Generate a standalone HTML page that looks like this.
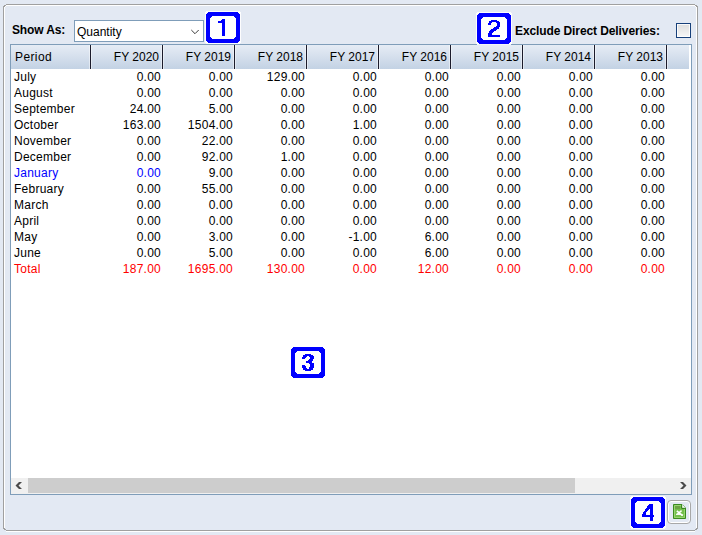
<!DOCTYPE html>
<html><head><meta charset="utf-8">
<style>
*{margin:0;padding:0;box-sizing:border-box}
html,body{width:702px;height:535px;overflow:hidden;background:#E3E9F3;font-family:"Liberation Sans",sans-serif;font-size:12px;color:#000}
.a{position:absolute}
.lbl{position:absolute;font-weight:bold;left:12px;top:22px;line-height:16px}
.combo{position:absolute;left:74px;top:20px;width:130px;height:22px;border:1px solid #7F9DB9;background:#fff}
.combo span{position:absolute;left:2px;top:3px;line-height:16px}
.grid{position:absolute;left:10px;top:44px;width:682px;height:451px;border:1px solid #7F9DB9;background:#fff}
.hdr{position:absolute;left:11px;top:45px;width:678px;height:24px;background:linear-gradient(#E6ECF5,#C3D2E4)}
.ht{position:absolute;top:45px;height:24px;line-height:24px;text-align:right;white-space:nowrap}
.sep{position:absolute;top:45px;width:3px;height:24px;background:linear-gradient(90deg,rgba(255,255,255,.45) 0 1px,#1b1b2b 1px 2px,rgba(255,255,255,.45) 2px 3px)}
.c{position:absolute;height:16px;line-height:16px;text-align:right;white-space:nowrap;letter-spacing:.25px}
.blu{color:#0000FF}
.tot{color:#FF0000}
.sb{position:absolute;left:11px;top:478px;width:680px;height:16px;background:#F0F0F0}
.thumb{position:absolute;left:28px;top:478px;width:547px;height:15px;background:#CDCDCD}
.chk{position:absolute;left:676px;top:23px;width:15px;height:15px;border:1px solid #17407A;background:linear-gradient(#DDDDDD,#F7F7F7);box-shadow:inset 0 0 0 1px rgba(255,255,255,.85)}
.xbtn{position:absolute;left:667px;top:500px;width:24px;height:24px;border:1px solid #A8A8A8;border-radius:4px;box-shadow:inset 0 0 0 1px #fff}
</style></head><body>
<svg class="a" style="left:0;top:0" width="702" height="535" shape-rendering="crispEdges"><path d="M6 4H695V5H6ZM4 5H6V6H4ZM3 6H5V7H3ZM3 7H4V528H3ZM3 528H5V529H3ZM4 529H6V530H4ZM6 530H695V531H6ZM695 529H697V530H695ZM696 528H698V529H696ZM697 7H698V528H697ZM696 6H698V7H696ZM695 5H697V6H695Z" fill="#A0A0A0"/><path d="M6 5H695V6H6ZM5 6H6V7H5ZM4 7H5V528H4ZM696 7H697V528H696ZM695 6H696V7H695ZM6 531H695V532H6Z" fill="#fff"/></svg>
<div class="lbl" style="letter-spacing:-.15px">Show As:</div>
<div class="combo"><span>Quantity</span>
<svg class="a" style="left:115px;top:8px" width="10" height="7" viewBox="0 0 10 7"><path d="M1.3 1 L5 4.7 L8.7 1" fill="none" stroke="#3A3A3A" stroke-width="1"/></svg>
</div>
<div class="lbl" style="left:515px;top:23px;letter-spacing:-.1px">Exclude Direct Deliveries:</div>
<div class="chk"></div>
<div class="grid"></div>
<div class="hdr"></div>
<div class="ht" style="left:15px;width:75px;text-align:left;letter-spacing:.4px">Period</div>
<div class="ht" style="left:90px;width:69px">FY 2020</div>
<div class="ht" style="left:162px;width:69px">FY 2019</div>
<div class="ht" style="left:234px;width:69px">FY 2018</div>
<div class="ht" style="left:306px;width:69px">FY 2017</div>
<div class="ht" style="left:378px;width:69px">FY 2016</div>
<div class="ht" style="left:450px;width:69px">FY 2015</div>
<div class="ht" style="left:522px;width:69px">FY 2014</div>
<div class="ht" style="left:594px;width:69px">FY 2013</div>
<div class="sep" style="left:89px"></div>
<div class="sep" style="left:161px"></div>
<div class="sep" style="left:233px"></div>
<div class="sep" style="left:305px"></div>
<div class="sep" style="left:377px"></div>
<div class="sep" style="left:449px"></div>
<div class="sep" style="left:521px"></div>
<div class="sep" style="left:593px"></div>
<div class="sep" style="left:665px"></div>
<div class="c" style="left:14px;top:69px;width:76px;text-align:left">July</div>
<div class="c" style="left:90px;top:69px;width:71px">0.00</div>
<div class="c" style="left:162px;top:69px;width:71px">0.00</div>
<div class="c" style="left:234px;top:69px;width:71px">129.00</div>
<div class="c" style="left:306px;top:69px;width:71px">0.00</div>
<div class="c" style="left:378px;top:69px;width:71px">0.00</div>
<div class="c" style="left:450px;top:69px;width:71px">0.00</div>
<div class="c" style="left:522px;top:69px;width:71px">0.00</div>
<div class="c" style="left:594px;top:69px;width:71px">0.00</div>
<div class="c" style="left:14px;top:85px;width:76px;text-align:left">August</div>
<div class="c" style="left:90px;top:85px;width:71px">0.00</div>
<div class="c" style="left:162px;top:85px;width:71px">0.00</div>
<div class="c" style="left:234px;top:85px;width:71px">0.00</div>
<div class="c" style="left:306px;top:85px;width:71px">0.00</div>
<div class="c" style="left:378px;top:85px;width:71px">0.00</div>
<div class="c" style="left:450px;top:85px;width:71px">0.00</div>
<div class="c" style="left:522px;top:85px;width:71px">0.00</div>
<div class="c" style="left:594px;top:85px;width:71px">0.00</div>
<div class="c" style="left:14px;top:101px;width:76px;text-align:left">September</div>
<div class="c" style="left:90px;top:101px;width:71px">24.00</div>
<div class="c" style="left:162px;top:101px;width:71px">5.00</div>
<div class="c" style="left:234px;top:101px;width:71px">0.00</div>
<div class="c" style="left:306px;top:101px;width:71px">0.00</div>
<div class="c" style="left:378px;top:101px;width:71px">0.00</div>
<div class="c" style="left:450px;top:101px;width:71px">0.00</div>
<div class="c" style="left:522px;top:101px;width:71px">0.00</div>
<div class="c" style="left:594px;top:101px;width:71px">0.00</div>
<div class="c" style="left:14px;top:117px;width:76px;text-align:left">October</div>
<div class="c" style="left:90px;top:117px;width:71px">163.00</div>
<div class="c" style="left:162px;top:117px;width:71px">1504.00</div>
<div class="c" style="left:234px;top:117px;width:71px">0.00</div>
<div class="c" style="left:306px;top:117px;width:71px">1.00</div>
<div class="c" style="left:378px;top:117px;width:71px">0.00</div>
<div class="c" style="left:450px;top:117px;width:71px">0.00</div>
<div class="c" style="left:522px;top:117px;width:71px">0.00</div>
<div class="c" style="left:594px;top:117px;width:71px">0.00</div>
<div class="c" style="left:14px;top:133px;width:76px;text-align:left">November</div>
<div class="c" style="left:90px;top:133px;width:71px">0.00</div>
<div class="c" style="left:162px;top:133px;width:71px">22.00</div>
<div class="c" style="left:234px;top:133px;width:71px">0.00</div>
<div class="c" style="left:306px;top:133px;width:71px">0.00</div>
<div class="c" style="left:378px;top:133px;width:71px">0.00</div>
<div class="c" style="left:450px;top:133px;width:71px">0.00</div>
<div class="c" style="left:522px;top:133px;width:71px">0.00</div>
<div class="c" style="left:594px;top:133px;width:71px">0.00</div>
<div class="c" style="left:14px;top:149px;width:76px;text-align:left">December</div>
<div class="c" style="left:90px;top:149px;width:71px">0.00</div>
<div class="c" style="left:162px;top:149px;width:71px">92.00</div>
<div class="c" style="left:234px;top:149px;width:71px">1.00</div>
<div class="c" style="left:306px;top:149px;width:71px">0.00</div>
<div class="c" style="left:378px;top:149px;width:71px">0.00</div>
<div class="c" style="left:450px;top:149px;width:71px">0.00</div>
<div class="c" style="left:522px;top:149px;width:71px">0.00</div>
<div class="c" style="left:594px;top:149px;width:71px">0.00</div>
<div class="c blu" style="left:14px;top:165px;width:76px;text-align:left">January</div>
<div class="c blu" style="left:90px;top:165px;width:71px">0.00</div>
<div class="c" style="left:162px;top:165px;width:71px">9.00</div>
<div class="c" style="left:234px;top:165px;width:71px">0.00</div>
<div class="c" style="left:306px;top:165px;width:71px">0.00</div>
<div class="c" style="left:378px;top:165px;width:71px">0.00</div>
<div class="c" style="left:450px;top:165px;width:71px">0.00</div>
<div class="c" style="left:522px;top:165px;width:71px">0.00</div>
<div class="c" style="left:594px;top:165px;width:71px">0.00</div>
<div class="c" style="left:14px;top:181px;width:76px;text-align:left">February</div>
<div class="c" style="left:90px;top:181px;width:71px">0.00</div>
<div class="c" style="left:162px;top:181px;width:71px">55.00</div>
<div class="c" style="left:234px;top:181px;width:71px">0.00</div>
<div class="c" style="left:306px;top:181px;width:71px">0.00</div>
<div class="c" style="left:378px;top:181px;width:71px">0.00</div>
<div class="c" style="left:450px;top:181px;width:71px">0.00</div>
<div class="c" style="left:522px;top:181px;width:71px">0.00</div>
<div class="c" style="left:594px;top:181px;width:71px">0.00</div>
<div class="c" style="left:14px;top:197px;width:76px;text-align:left">March</div>
<div class="c" style="left:90px;top:197px;width:71px">0.00</div>
<div class="c" style="left:162px;top:197px;width:71px">0.00</div>
<div class="c" style="left:234px;top:197px;width:71px">0.00</div>
<div class="c" style="left:306px;top:197px;width:71px">0.00</div>
<div class="c" style="left:378px;top:197px;width:71px">0.00</div>
<div class="c" style="left:450px;top:197px;width:71px">0.00</div>
<div class="c" style="left:522px;top:197px;width:71px">0.00</div>
<div class="c" style="left:594px;top:197px;width:71px">0.00</div>
<div class="c" style="left:14px;top:213px;width:76px;text-align:left">April</div>
<div class="c" style="left:90px;top:213px;width:71px">0.00</div>
<div class="c" style="left:162px;top:213px;width:71px">0.00</div>
<div class="c" style="left:234px;top:213px;width:71px">0.00</div>
<div class="c" style="left:306px;top:213px;width:71px">0.00</div>
<div class="c" style="left:378px;top:213px;width:71px">0.00</div>
<div class="c" style="left:450px;top:213px;width:71px">0.00</div>
<div class="c" style="left:522px;top:213px;width:71px">0.00</div>
<div class="c" style="left:594px;top:213px;width:71px">0.00</div>
<div class="c" style="left:14px;top:229px;width:76px;text-align:left">May</div>
<div class="c" style="left:90px;top:229px;width:71px">0.00</div>
<div class="c" style="left:162px;top:229px;width:71px">3.00</div>
<div class="c" style="left:234px;top:229px;width:71px">0.00</div>
<div class="c" style="left:306px;top:229px;width:71px">-1.00</div>
<div class="c" style="left:378px;top:229px;width:71px">6.00</div>
<div class="c" style="left:450px;top:229px;width:71px">0.00</div>
<div class="c" style="left:522px;top:229px;width:71px">0.00</div>
<div class="c" style="left:594px;top:229px;width:71px">0.00</div>
<div class="c" style="left:14px;top:245px;width:76px;text-align:left">June</div>
<div class="c" style="left:90px;top:245px;width:71px">0.00</div>
<div class="c" style="left:162px;top:245px;width:71px">5.00</div>
<div class="c" style="left:234px;top:245px;width:71px">0.00</div>
<div class="c" style="left:306px;top:245px;width:71px">0.00</div>
<div class="c" style="left:378px;top:245px;width:71px">6.00</div>
<div class="c" style="left:450px;top:245px;width:71px">0.00</div>
<div class="c" style="left:522px;top:245px;width:71px">0.00</div>
<div class="c" style="left:594px;top:245px;width:71px">0.00</div>
<div class="c tot" style="left:14px;top:261px;width:76px;text-align:left">Total</div>
<div class="c tot" style="left:90px;top:261px;width:71px">187.00</div>
<div class="c tot" style="left:162px;top:261px;width:71px">1695.00</div>
<div class="c tot" style="left:234px;top:261px;width:71px">130.00</div>
<div class="c tot" style="left:306px;top:261px;width:71px">0.00</div>
<div class="c tot" style="left:378px;top:261px;width:71px">12.00</div>
<div class="c tot" style="left:450px;top:261px;width:71px">0.00</div>
<div class="c tot" style="left:522px;top:261px;width:71px">0.00</div>
<div class="c tot" style="left:594px;top:261px;width:71px">0.00</div>
<div class="sb"></div>
<div class="thumb"></div>
<svg class="a" style="left:0;top:0" width="702" height="535"><path d="M22 482H19L15.5 485.5L19 489H22L18.5 485.5Z" fill="#4A4A4A"/><path d="M680 482H683L686.5 485.5L683 489H680L683.5 485.5Z" fill="#4A4A4A"/></svg>
<div class="xbtn"></div>
<svg class="a" style="left:673px;top:504px" width="13" height="15" viewBox="0 0 13 15"><path d="M0.5 0.5H9L12.5 4V14.5H0.5Z" fill="#74BF4C" stroke="#3B8A20"/><path d="M1.5 1.5H8.5L11.5 4.5V13.5H1.5Z" fill="none" stroke="#9FD978" stroke-opacity=".85"/><rect x="2" y="2" width="5" height="3" fill="#6CA345"/><path d="M9 0.5L12.5 4H9Z" fill="#fff"/><path d="M8.7 1V4.3H12" fill="none" stroke="#2F7A18" stroke-width="1"/><path d="M3.8 6.8L8.6 10.8M8.6 6.6L4.4 10" stroke="#fff" stroke-width="1.5"/><path d="M3 9.7H7.6V10.9H3Z" fill="#fff"/><path d="M7.6 9.6L10.3 10.6L9.7 11.9L8 11.7Z" fill="#fff"/></svg>
<svg class="a" style="left:205px;top:11px" width="36" height="33" shape-rendering="crispEdges"><path d="M1 0h34v1h-34zM0 1h36v1h-36zM0 2h36v1h-36zM0 3h36v1h-36zM0 4h36v1h-36zM0 5h36v1h-36zM0 6h36v1h-36zM0 7h36v1h-36zM0 8h36v1h-36zM0 9h36v1h-36zM0 10h36v1h-36zM0 11h36v1h-36zM0 12h36v1h-36zM0 13h36v1h-36zM0 14h36v1h-36zM0 15h36v1h-36zM0 16h36v1h-36zM0 17h36v1h-36zM0 18h36v1h-36zM0 19h36v1h-36zM0 20h36v1h-36zM0 21h36v1h-36zM0 22h36v1h-36zM0 23h36v1h-36zM0 24h36v1h-36zM0 25h36v1h-36zM0 26h36v1h-36zM0 27h36v1h-36zM0 28h36v1h-36zM0 29h36v1h-36zM0 30h36v1h-36zM0 31h36v1h-36zM1 32h34v1h-34z" fill="#fff" fill-opacity=".9"/><path d="M3 1h30v1h-30zM2 2h32v1h-32zM1 3h34v1h-34zM1 4h34v1h-34zM1 5h34v1h-34zM1 6h34v1h-34zM1 7h34v1h-34zM1 8h34v1h-34zM1 9h34v1h-34zM1 10h34v1h-34zM1 11h34v1h-34zM1 12h34v1h-34zM1 13h34v1h-34zM1 14h34v1h-34zM1 15h34v1h-34zM1 16h34v1h-34zM1 17h34v1h-34zM1 18h34v1h-34zM1 19h34v1h-34zM1 20h34v1h-34zM1 21h34v1h-34zM1 22h34v1h-34zM1 23h34v1h-34zM1 24h34v1h-34zM1 25h34v1h-34zM1 26h34v1h-34zM1 27h34v1h-34zM1 28h34v1h-34zM1 29h34v1h-34zM2 30h32v1h-32zM3 31h30v1h-30z" fill="#0000FF"/><path d="M7 5h22v1h-22zM6 6h24v1h-24zM5 7h26v1h-26zM5 8h26v1h-26zM5 9h26v1h-26zM5 10h26v1h-26zM5 11h26v1h-26zM5 12h26v1h-26zM5 13h26v1h-26zM5 14h26v1h-26zM5 15h26v1h-26zM5 16h26v1h-26zM5 17h26v1h-26zM5 18h26v1h-26zM5 19h26v1h-26zM5 20h26v1h-26zM5 21h26v1h-26zM5 22h26v1h-26zM5 23h26v1h-26zM5 24h26v1h-26zM5 25h26v1h-26zM6 26h24v1h-24zM7 27h22v1h-22z" fill="#fff"/><path d="M17 8h3v1h-3zM16 9h4v1h-4zM13 10h7v1h-7zM13 11h7v1h-7zM17 12h3v1h-3zM17 13h3v1h-3zM17 14h3v1h-3zM17 15h3v1h-3zM17 16h3v1h-3zM17 17h3v1h-3zM17 18h3v1h-3zM17 19h3v1h-3zM17 20h3v1h-3zM17 21h3v1h-3zM17 22h3v1h-3zM17 23h3v1h-3zM17 24h3v1h-3z" fill="#0000FF"/></svg>
<svg class="a" style="left:476px;top:12px" width="36" height="33" shape-rendering="crispEdges"><path d="M1 0h34v1h-34zM0 1h36v1h-36zM0 2h36v1h-36zM0 3h36v1h-36zM0 4h36v1h-36zM0 5h36v1h-36zM0 6h36v1h-36zM0 7h36v1h-36zM0 8h36v1h-36zM0 9h36v1h-36zM0 10h36v1h-36zM0 11h36v1h-36zM0 12h36v1h-36zM0 13h36v1h-36zM0 14h36v1h-36zM0 15h36v1h-36zM0 16h36v1h-36zM0 17h36v1h-36zM0 18h36v1h-36zM0 19h36v1h-36zM0 20h36v1h-36zM0 21h36v1h-36zM0 22h36v1h-36zM0 23h36v1h-36zM0 24h36v1h-36zM0 25h36v1h-36zM0 26h36v1h-36zM0 27h36v1h-36zM0 28h36v1h-36zM0 29h36v1h-36zM0 30h36v1h-36zM0 31h36v1h-36zM1 32h34v1h-34z" fill="#fff" fill-opacity=".9"/><path d="M3 1h30v1h-30zM2 2h32v1h-32zM1 3h34v1h-34zM1 4h34v1h-34zM1 5h34v1h-34zM1 6h34v1h-34zM1 7h34v1h-34zM1 8h34v1h-34zM1 9h34v1h-34zM1 10h34v1h-34zM1 11h34v1h-34zM1 12h34v1h-34zM1 13h34v1h-34zM1 14h34v1h-34zM1 15h34v1h-34zM1 16h34v1h-34zM1 17h34v1h-34zM1 18h34v1h-34zM1 19h34v1h-34zM1 20h34v1h-34zM1 21h34v1h-34zM1 22h34v1h-34zM1 23h34v1h-34zM1 24h34v1h-34zM1 25h34v1h-34zM1 26h34v1h-34zM1 27h34v1h-34zM1 28h34v1h-34zM1 29h34v1h-34zM2 30h32v1h-32zM3 31h30v1h-30z" fill="#0000FF"/><path d="M7 5h22v1h-22zM6 6h24v1h-24zM5 7h26v1h-26zM5 8h26v1h-26zM5 9h26v1h-26zM5 10h26v1h-26zM5 11h26v1h-26zM5 12h26v1h-26zM5 13h26v1h-26zM5 14h26v1h-26zM5 15h26v1h-26zM5 16h26v1h-26zM5 17h26v1h-26zM5 18h26v1h-26zM5 19h26v1h-26zM5 20h26v1h-26zM5 21h26v1h-26zM5 22h26v1h-26zM5 23h26v1h-26zM5 24h26v1h-26zM5 25h26v1h-26zM6 26h24v1h-24zM7 27h22v1h-22z" fill="#fff"/><path d="M15 8h6v1h-6zM13 9h10v1h-10zM13 10h3v1h-3zM20 10h4v1h-4zM12 11h3v1h-3zM21 11h3v1h-3zM12 12h3v1h-3zM21 12h3v1h-3zM21 13h3v1h-3zM20 14h4v1h-4zM18 15h5v1h-5zM17 16h6v1h-6zM15 17h6v1h-6zM14 18h6v1h-6zM13 19h5v1h-5zM13 20h4v1h-4zM12 21h4v1h-4zM12 22h4v1h-4zM12 23h12v1h-12zM12 24h12v1h-12z" fill="#0000FF"/></svg>
<svg class="a" style="left:290px;top:346px" width="36" height="33" shape-rendering="crispEdges"><path d="M1 0h34v1h-34zM0 1h36v1h-36zM0 2h36v1h-36zM0 3h36v1h-36zM0 4h36v1h-36zM0 5h36v1h-36zM0 6h36v1h-36zM0 7h36v1h-36zM0 8h36v1h-36zM0 9h36v1h-36zM0 10h36v1h-36zM0 11h36v1h-36zM0 12h36v1h-36zM0 13h36v1h-36zM0 14h36v1h-36zM0 15h36v1h-36zM0 16h36v1h-36zM0 17h36v1h-36zM0 18h36v1h-36zM0 19h36v1h-36zM0 20h36v1h-36zM0 21h36v1h-36zM0 22h36v1h-36zM0 23h36v1h-36zM0 24h36v1h-36zM0 25h36v1h-36zM0 26h36v1h-36zM0 27h36v1h-36zM0 28h36v1h-36zM0 29h36v1h-36zM0 30h36v1h-36zM0 31h36v1h-36zM1 32h34v1h-34z" fill="#fff" fill-opacity=".9"/><path d="M3 1h30v1h-30zM2 2h32v1h-32zM1 3h34v1h-34zM1 4h34v1h-34zM1 5h34v1h-34zM1 6h34v1h-34zM1 7h34v1h-34zM1 8h34v1h-34zM1 9h34v1h-34zM1 10h34v1h-34zM1 11h34v1h-34zM1 12h34v1h-34zM1 13h34v1h-34zM1 14h34v1h-34zM1 15h34v1h-34zM1 16h34v1h-34zM1 17h34v1h-34zM1 18h34v1h-34zM1 19h34v1h-34zM1 20h34v1h-34zM1 21h34v1h-34zM1 22h34v1h-34zM1 23h34v1h-34zM1 24h34v1h-34zM1 25h34v1h-34zM1 26h34v1h-34zM1 27h34v1h-34zM1 28h34v1h-34zM1 29h34v1h-34zM2 30h32v1h-32zM3 31h30v1h-30z" fill="#0000FF"/><path d="M7 5h22v1h-22zM6 6h24v1h-24zM5 7h26v1h-26zM5 8h26v1h-26zM5 9h26v1h-26zM5 10h26v1h-26zM5 11h26v1h-26zM5 12h26v1h-26zM5 13h26v1h-26zM5 14h26v1h-26zM5 15h26v1h-26zM5 16h26v1h-26zM5 17h26v1h-26zM5 18h26v1h-26zM5 19h26v1h-26zM5 20h26v1h-26zM5 21h26v1h-26zM5 22h26v1h-26zM5 23h26v1h-26zM5 24h26v1h-26zM5 25h26v1h-26zM6 26h24v1h-24zM7 27h22v1h-22z" fill="#fff"/><path d="M15 8h6v1h-6zM13 9h10v1h-10zM13 10h4v1h-4zM19 10h5v1h-5zM12 11h4v1h-4zM20 11h4v1h-4zM12 12h3v1h-3zM20 12h4v1h-4zM19 13h4v1h-4zM18 14h5v1h-5zM16 15h6v1h-6zM16 16h6v1h-6zM19 17h5v1h-5zM20 18h4v1h-4zM12 19h3v1h-3zM20 19h4v1h-4zM12 20h4v1h-4zM20 20h4v1h-4zM12 21h4v1h-4zM19 21h5v1h-5zM13 22h4v1h-4zM19 22h4v1h-4zM13 23h10v1h-10zM15 24h6v1h-6z" fill="#0000FF"/></svg>
<svg class="a" style="left:630px;top:496px" width="36" height="33" shape-rendering="crispEdges"><path d="M1 0h34v1h-34zM0 1h36v1h-36zM0 2h36v1h-36zM0 3h36v1h-36zM0 4h36v1h-36zM0 5h36v1h-36zM0 6h36v1h-36zM0 7h36v1h-36zM0 8h36v1h-36zM0 9h36v1h-36zM0 10h36v1h-36zM0 11h36v1h-36zM0 12h36v1h-36zM0 13h36v1h-36zM0 14h36v1h-36zM0 15h36v1h-36zM0 16h36v1h-36zM0 17h36v1h-36zM0 18h36v1h-36zM0 19h36v1h-36zM0 20h36v1h-36zM0 21h36v1h-36zM0 22h36v1h-36zM0 23h36v1h-36zM0 24h36v1h-36zM0 25h36v1h-36zM0 26h36v1h-36zM0 27h36v1h-36zM0 28h36v1h-36zM0 29h36v1h-36zM0 30h36v1h-36zM0 31h36v1h-36zM1 32h34v1h-34z" fill="#fff" fill-opacity=".9"/><path d="M3 1h30v1h-30zM2 2h32v1h-32zM1 3h34v1h-34zM1 4h34v1h-34zM1 5h34v1h-34zM1 6h34v1h-34zM1 7h34v1h-34zM1 8h34v1h-34zM1 9h34v1h-34zM1 10h34v1h-34zM1 11h34v1h-34zM1 12h34v1h-34zM1 13h34v1h-34zM1 14h34v1h-34zM1 15h34v1h-34zM1 16h34v1h-34zM1 17h34v1h-34zM1 18h34v1h-34zM1 19h34v1h-34zM1 20h34v1h-34zM1 21h34v1h-34zM1 22h34v1h-34zM1 23h34v1h-34zM1 24h34v1h-34zM1 25h34v1h-34zM1 26h34v1h-34zM1 27h34v1h-34zM1 28h34v1h-34zM1 29h34v1h-34zM2 30h32v1h-32zM3 31h30v1h-30z" fill="#0000FF"/><path d="M7 5h22v1h-22zM6 6h24v1h-24zM5 7h26v1h-26zM5 8h26v1h-26zM5 9h26v1h-26zM5 10h26v1h-26zM5 11h26v1h-26zM5 12h26v1h-26zM5 13h26v1h-26zM5 14h26v1h-26zM5 15h26v1h-26zM5 16h26v1h-26zM5 17h26v1h-26zM5 18h26v1h-26zM5 19h26v1h-26zM5 20h26v1h-26zM5 21h26v1h-26zM5 22h26v1h-26zM5 23h26v1h-26zM5 24h26v1h-26zM5 25h26v1h-26zM6 26h24v1h-24zM7 27h22v1h-22z" fill="#fff"/><path d="M19 8h4v1h-4zM18 9h5v1h-5zM17 10h6v1h-6zM17 11h6v1h-6zM16 12h7v1h-7zM15 13h4v1h-4zM20 13h3v1h-3zM15 14h3v1h-3zM20 14h3v1h-3zM14 15h3v1h-3zM20 15h3v1h-3zM13 16h3v1h-3zM20 16h3v1h-3zM13 17h3v1h-3zM20 17h3v1h-3zM12 18h4v1h-4zM20 18h3v1h-3zM12 19h12v1h-12zM12 20h12v1h-12zM20 21h3v1h-3zM20 22h3v1h-3zM20 23h3v1h-3zM20 24h3v1h-3z" fill="#0000FF"/></svg>
</body></html>
